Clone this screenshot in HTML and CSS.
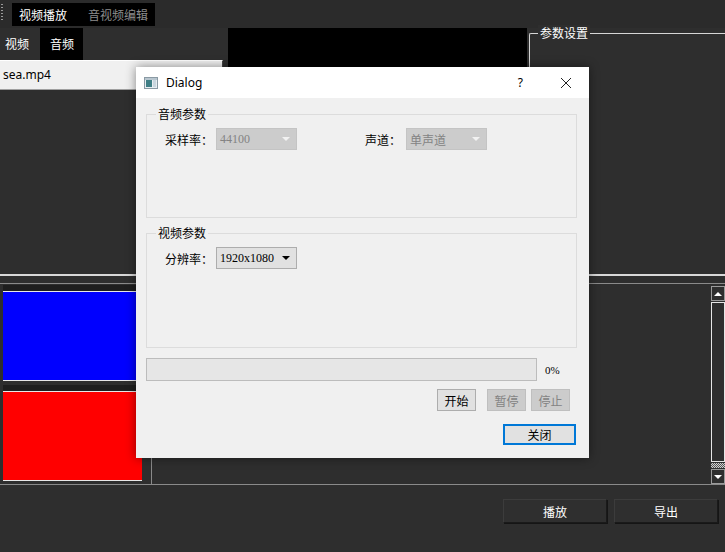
FILE: index.html
```html
<!DOCTYPE html>
<html lang="zh">
<head>
<meta charset="utf-8">
<title>视频播放</title>
<link rel="stylesheet" href="styles.css">
</head>
<body>
<div class="app">
  <div class="topbar">
    <div class="grip"></div>
    <div class="tabs">
      <span class="tab tab-a active">视频播放</span>
      <span class="tab tab-b">音视频编辑</span>
    </div>
  </div>

  <div class="upper">
    <div class="leftcol">
      <div class="subtabs">
        <span class="subtab st-a">视频</span>
        <span class="subtab st-b active">音频</span>
      </div>
      <div class="filelist">
        <div class="fileitem">sea.mp4</div>
      </div>
    </div>
    <div class="video"></div>
    <div class="params">
      <span class="params-title">参数设置</span>
    </div>
  </div>

  <div class="sep"></div>

  <div class="lower">
    <div class="thumbs">
      <div class="thumb blue"></div>
      <div class="thumb red"></div>
    </div>
    <div class="timeline"></div>
    <div class="scrollbar">
      <div class="sb-btn"><span class="tri-up"></span></div>
      <div class="sb-track"></div>
      <div class="sb-check"></div>
      <div class="sb-btn"><span class="tri-down"></span></div>
    </div>
  </div>

  <div class="footer">
    <button class="fbtn">播放</button>
    <button class="fbtn">导出</button>
  </div>

  <div class="dialog">
    <div class="dlg-title">
      <svg class="dlg-icon" width="14" height="12" viewBox="0 0 14 12">
        <rect x="0.5" y="0.5" width="13" height="11" fill="#e8eef2" stroke="#8a9aa4"/>
        <rect x="1" y="1" width="12" height="2" fill="#b8c6cf"/>
        <rect x="2" y="3" width="6" height="7" fill="#3f7f86"/>
        <rect x="9" y="3" width="3" height="7" fill="#c9d6de"/>
      </svg>
      <span class="dlg-name">Dialog</span>
      <span class="dlg-help">?</span>
      <svg class="dlg-close" width="12" height="12" viewBox="0 0 12 12">
        <path d="M1 1 L11 11 M11 1 L1 11" stroke="#222" stroke-width="1"/>
      </svg>
    </div>
    <div class="dlg-body">
      <div class="group g1">
        <span class="group-title">音频参数</span>
        <div class="grow">
          <span class="lbl lbl-a">采样率：</span>
          <div class="combo disabled"><span class="ctext num">44100</span><span class="arrow"></span></div>
          <span class="lbl lbl-b">声道：</span>
          <div class="combo disabled"><span class="ctext">单声道</span><span class="arrow"></span></div>
        </div>
      </div>
      <div class="group g2">
        <span class="group-title">视频参数</span>
        <div class="grow">
          <span class="lbl lbl-a">分辨率：</span>
          <div class="combo"><span class="ctext num">1920x1080</span><span class="arrow"></span></div>
        </div>
      </div>
      <div class="prog-row">
        <div class="progress"></div>
        <span class="pct">0%</span>
      </div>
      <div class="btn-row">
        <button class="dbtn">开始</button>
        <button class="dbtn off b-pause">暂停</button>
        <button class="dbtn off b-stop">停止</button>
      </div>
      <div class="close-row">
        <button class="dbtn close">关闭</button>
      </div>
    </div>
  </div>
</div>
</body>
</html>
```

FILE: styles.css
```css
* { box-sizing: border-box; }
html, body { margin: 0; padding: 0; background: #2e2e2e; }
body {
  font-family: "Noto Sans CJK SC", "Noto Sans", sans-serif;
  font-size: 12px;
  color: #fff;
}
.app {
  position: relative;
  width: 725px;
  height: 552px;
  background: #2e2e2e;
  overflow: hidden;
  display: flex;
  flex-direction: column;
}

/* top tab bar */
.topbar {
  height: 28px;
  display: flex;
  align-items: flex-start;
  padding-top: 3px;
  background: #2b2b2b;
}
.grip {
  width: 4px;
  height: 19px;
  margin-right: 8px;
  background-image: radial-gradient(circle, #9a9a9a 0.8px, transparent 1px);
  background-size: 4px 3px;
}
.tabs {
  display: flex;
  height: 23px;
  background: #000;
}
.tab {
  height: 23px;
  line-height: 23px;
  color: #8c8c8c;
}
.tab.active { color: #fff; }
.tab-a { width: 68px; padding-left: 7px; }
.tab-b { width: 75px; padding-left: 8px; }

/* upper area */
.upper {
  height: 246px;
  display: flex;
}
.leftcol {
  width: 228px;
  display: flex;
  flex-direction: column;
}
.subtabs {
  height: 32px;
  display: flex;
}
.subtab {
  height: 32px;
  line-height: 32px;
  color: #fff;
}
.st-a { width: 40px; padding-left: 5px; }
.st-b { width: 43px; padding-left: 10px; background: #000; }
.filelist {
  flex: 1;
  background: #2e2e2e;
}
.fileitem {
  width: 223px;
  height: 30px;
  line-height: 28px;
  padding-left: 3px;
  background: #f0f0f0;
  color: #000;
  border-top: 1px solid #ffffff;
  border-right: 1px solid #444;
  border-bottom: 1px solid #a0a0a0;
  font-family: "Noto Sans", "Noto Sans CJK SC", sans-serif;
  font-size: 12px;
}
.video {
  width: 299px;
  height: 242px;
  background: #000;
}
.params {
  position: relative;
  flex: 1;
  margin-left: 2px;
  margin-top: 5px;
  border-top: 1px solid #d6d6d6;
  border-left: 1px solid #d6d6d6;
  border-top-left-radius: 2px;
}
.params-title {
  position: absolute;
  top: -9px;
  left: 8px;
  padding: 0 2px;
  background: #2e2e2e;
  color: #fff;
  line-height: 16px;
}

.sep {
  height: 2px;
  background: #d8d8d8;
}

/* lower area */
.lower {
  margin-top: 7px;
  height: 202px;
  display: flex;
  border-top: 1px solid #8a8a8a;
  border-bottom: 1px solid #8a8a8a;
}
.thumbs {
  width: 152px;
  border-right: 1px solid #8a8a8a;
  padding-left: 3px;
}
.thumb {
  width: 139px;
  height: 90px;
  border-top: 1px solid #e8e8e8;
  border-bottom: 1px solid #e8e8e8;
  box-shadow: 0 -6px 0 #1e1e1e;
}
.thumb.blue { background: #0000ff; margin-top: 7px; }
.thumb.red { background: #ff0000; margin-top: 10px; }
.timeline { flex: 1; }
.scrollbar {
  width: 14px;
  padding-top: 2px;
  display: flex;
  flex-direction: column;
}
.sb-btn {
  height: 15px;
  border: 1px solid #9a9a9a;
  display: flex;
  align-items: center;
  justify-content: center;
}
.tri-up {
  width: 0; height: 0;
  border-left: 4px solid transparent;
  border-right: 4px solid transparent;
  border-bottom: 4px solid #fff;
}
.tri-down {
  width: 0; height: 0;
  border-left: 4px solid transparent;
  border-right: 4px solid transparent;
  border-top: 4px solid #fff;
}
.sb-track {
  height: 160px;
  margin-top: 1px;
  border: 1px solid #e6e6e6;
}
.sb-check {
  height: 5px;
  margin: 1px 0;
  background-image: repeating-conic-gradient(#d0d0d0 0 25%, #555 0 50%);
  background-size: 2px 2px;
}

/* footer */
.footer {
  flex: 1;
  display: flex;
  justify-content: flex-end;
  align-items: flex-start;
  padding-top: 14px;
  padding-right: 7px;
  gap: 7px;
}
.fbtn {
  width: 104px;
  height: 24px;
  background: #2f2f2f;
  color: #fff;
  font-family: "Noto Sans CJK SC", sans-serif;
  font-size: 12px;
  border: 1px solid #1a1a1a;
  border-top-color: #3c3c3c;
  border-left-color: #3c3c3c;
  box-shadow: 1px 1px 0 #151515;
  padding: 0;
}

/* dialog */
.dialog {
  position: absolute;
  left: 136px;
  top: 67px;
  width: 453px;
  height: 391px;
  background: #f0f0f0;
  color: #000;
  box-shadow: 0 0 10px rgba(0, 0, 0, 0.45);
  display: flex;
  flex-direction: column;
}
.dlg-title {
  height: 31px;
  background: #fff;
  display: flex;
  align-items: center;
  padding-left: 8px;
}
.dlg-icon { margin-right: 8px; margin-top: 1px; }
.dlg-name {
  font-family: "Noto Sans", sans-serif;
  font-size: 12px;
  color: #000;
  flex: 1;
}
.dlg-help {
  font-family: "Noto Sans", sans-serif;
  font-size: 12px;
  color: #000;
  margin-right: 37px;
}
.dlg-close { margin-right: 17px; }

.dlg-body {
  flex: 1;
  display: flex;
  flex-direction: column;
  padding: 16px 12px 0 10px;
}
.group {
  position: relative;
  border: 1px solid #dcdcdc;
  padding: 13px 0 0 18px;
}
.g1 { height: 104px; margin-bottom: 15px; }
.g2 { height: 115px; margin-bottom: 10px; }
.group-title {
  position: absolute;
  top: -9px;
  left: 9px;
  padding: 0 2px;
  background: #f0f0f0;
  line-height: 16px;
  color: #000;
}
.grow {
  display: flex;
  align-items: center;
  height: 22px;
}
.lbl { color: #000; white-space: nowrap; }
.lbl-a { width: 51px; }
.lbl-b { width: 41px; margin-left: 68px; }
.combo {
  position: relative;
  width: 81px;
  height: 22px;
  border: 1px solid #adadad;
  background: #e1e1e1;
  display: flex;
  align-items: center;
  padding-left: 3px;
  color: #000;
}
.combo.disabled {
  background: #cccccc;
  border-color: #c4c4c4;
  color: #838383;
}
.ctext.num {
  font-family: "Liberation Serif", serif;
  font-size: 12px;
}
.arrow {
  position: absolute;
  right: 6px;
  top: 8px;
  width: 0; height: 0;
  border-left: 4px solid transparent;
  border-right: 4px solid transparent;
  border-top: 4px solid #000;
}
.combo.disabled .arrow { border-top-color: #f2f2f2; }

.prog-row {
  display: flex;
  align-items: center;
  height: 23px;
}
.progress {
  width: 391px;
  height: 23px;
  background: #e6e6e6;
  border: 1px solid #bcbcbc;
}
.pct {
  margin-left: 8px;
  font-family: "Liberation Serif", serif;
  font-size: 11px;
  color: #000;
}
.btn-row {
  display: flex;
  justify-content: flex-end;
  margin-top: 8px;
  padding-right: 7px;
}
.dbtn {
  width: 39px;
  height: 22px;
  padding: 0;
  border: 1px solid #adadad;
  background: #e1e1e1;
  color: #000;
  font-family: "Noto Sans CJK SC", sans-serif;
  font-size: 12px;
}
.dbtn.off {
  background: #cccccc;
  border-color: #bfbfbf;
  color: #838383;
}
.b-pause { margin-left: 11px; }
.b-stop { margin-left: 5px; }
.close-row {
  display: flex;
  justify-content: flex-end;
  margin-top: 13px;
  padding-right: 1px;
}
.dbtn.close {
  width: 73px;
  height: 21px;
  border: 2px solid #0078d7;
}
```
